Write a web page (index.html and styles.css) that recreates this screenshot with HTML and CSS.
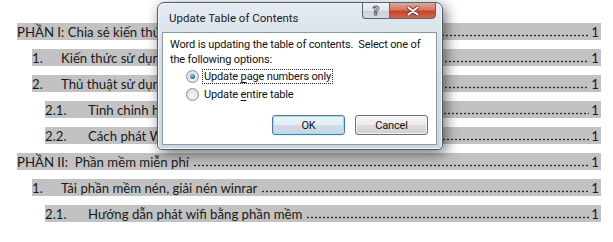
FILE: index.html
```html
<!DOCTYPE html>
<html>
<head>
<meta charset="utf-8">
<link rel="stylesheet" href="styles.css">
</head>
<body>
<div class="page">
  <div class="doc">
    <div class="row lv0"><span class="title">PHẦN I: Chia sẻ kiến thức máy tính</span><span class="leader"></span><span class="pg">1</span></div>
    <div class="row lv1"><span class="num">1.</span><span class="title">Kiến thức sử dụng máy tính</span><span class="leader"></span><span class="pg">1</span></div>
    <div class="row lv1"><span class="num">2.</span><span class="title">Thủ thuật sử dụng máy tính</span><span class="leader"></span><span class="pg">1</span></div>
    <div class="row lv2"><span class="num">2.1.</span><span class="title">Tinh chỉnh hệ thống</span><span class="leader"></span><span class="pg">1</span></div>
    <div class="row lv2"><span class="num">2.2.</span><span class="title">Cách phát Wifi</span><span class="leader"></span><span class="pg">1</span></div>
    <div class="row lv0"><span class="title">PHẦN II:&nbsp; Phần mềm miễn phí</span><span class="leader"></span><span class="pg">1</span></div>
    <div class="row lv1"><span class="num">1.</span><span class="title">Tải phần mềm nén, giải nén winrar</span><span class="leader"></span><span class="pg">1</span></div>
    <div class="row lv2"><span class="num">2.1.</span><span class="title">Hướng dẫn phát wifi bằng phần mềm</span><span class="leader"></span><span class="pg">1</span></div>
  </div>

  <div class="dialog">
    <div class="titlebar">
      <span class="dtitle">Update Table of Contents</span>
      <div class="caption-btns">
        <span class="help">?</span>
        <span class="close">
          <svg width="14" height="10" viewBox="0 0 14 10"><path d="M2.5 1.5 L11.5 8.5 M11.5 1.5 L2.5 8.5" stroke="#7a2a1a" stroke-width="3.6" stroke-linecap="round"/><path d="M2.5 1.5 L11.5 8.5 M11.5 1.5 L2.5 8.5" stroke="#fff" stroke-width="2.2" stroke-linecap="round"/></svg>
        </span>
      </div>
    </div>
    <div class="panel">
      <p class="msg">Word is updating the table of contents.&nbsp; Select one of<br>the following options:</p>
      <div class="options">
        <div class="opt"><span class="radio checked"></span><span class="lbl focus">Update <u>p</u>age numbers only</span></div>
        <div class="opt"><span class="radio"></span><span class="lbl">Update <u>e</u>ntire table</span></div>
      </div>
      <div class="buttons">
        <span class="btn default">OK</span>
        <span class="btn">Cancel</span>
      </div>
    </div>
  </div>
</div>
</body>
</html>
```

FILE: styles.css
```css
html, body {
  margin: 0;
  padding: 0;
  background: #fff;
}
.page {
  position: relative;
  width: 613px;
  height: 242px;
  overflow: hidden;
  background: #fff;
}
.doc {
  display: flex;
  flex-direction: column;
  gap: 9px;
  padding: 23px 12px 0 0;
  font-family: Lato, "Noto Sans", sans-serif;
  font-size: 13.2px;
  color: #1a1a1a;
}
.row {
  display: flex;
  align-items: center;
  height: 17px;
  background: #c2c2c2;
  white-space: nowrap;
  overflow: hidden;
}
.lv0 { margin-left: 17px; }
.lv1 { margin-left: 32px; }
.lv2 { margin-left: 45px; }
.lv1 .num { width: 29px; flex: none; }
.lv2 .num { width: 43px; flex: none; }
.title { flex: none; padding-right: 3px; }
.leader {
  flex: 1;
  align-self: stretch;
  background-image: radial-gradient(circle, #2a2a2a 0.75px, rgba(42,42,42,0) 1.2px);
  background-size: 4px 3px;
  background-repeat: repeat-x;
  background-position: 1px 11px;
}
.pg { flex: none; padding: 0 2px 0 2px; }

/* dialog */
.dialog {
  position: absolute;
  left: 157px;
  top: 2px;
  width: 286px;
  height: 148px;
  box-sizing: border-box;
  border: 1px solid #4e5a64;
  border-radius: 7px 7px 5px 5px;
  background: linear-gradient(180deg, #e4ebf1 0%, #d3dde6 40%, #cdd7e0 100%);
  box-shadow: 3px 4px 14px rgba(0,0,0,0.55), inset 0 0 0 1px rgba(255,255,255,0.75);
  display: flex;
  flex-direction: column;
  padding: 0 5px 4px 4px;
  font-family: Roboto, "Open Sans", sans-serif;
  font-size: 11px;
  letter-spacing: -0.15px;
  color: #111;
}
.titlebar {
  height: 29px;
  display: flex;
  align-items: flex-start;
  justify-content: space-between;
  flex: none;
}
.dtitle {
  margin: 8px 0 0 7px;
  font-size: 11.5px;
  letter-spacing: 0;
  color: #1b1b1b;
}
.caption-btns {
  display: flex;
  margin-right: 1px;
  margin-top: -1px;
}
.help, .close {
  height: 17px;
  box-sizing: border-box;
  border: 1px solid #5a6570;
  display: flex;
  align-items: center;
  justify-content: center;
}
.help {
  width: 27px;
  border-right: none;
  border-radius: 0 0 0 4px;
  background: linear-gradient(180deg, #eef2f5 0%, #dfe6ec 50%, #c8d2da 51%, #d6dee5 100%);
  font-family: "DejaVu Sans", sans-serif;
  font-weight: bold;
  font-size: 12px;
  color: #eef2f5;
  -webkit-text-stroke: 1px #59636c;
}
.close {
  width: 47px;
  border-radius: 0 0 4px 0;
  background: linear-gradient(180deg, #e9a48f 0%, #d9735a 48%, #c4442a 52%, #d5654a 100%);
}
.panel {
  flex: 1;
  background: #fff;
  border: 1px solid #8c99a4;
  display: flex;
  flex-direction: column;
  padding: 4px 8px 9px 7px;
}
.msg {
  margin: 0;
  line-height: 15px;
  white-space: nowrap;
}
.options {
  display: flex;
  flex-direction: column;
  gap: 3px;
  margin: 2px 0 0 16px;
}
.opt {
  display: flex;
  align-items: center;
  gap: 4px;
  height: 15px;
}
.radio {
  width: 13px;
  height: 13px;
  box-sizing: border-box;
  border-radius: 50%;
  border: 1px solid #8e8f8f;
  background: radial-gradient(circle at 50% 60%, #f7f7f7 0%, #e4e4e4 55%, #cfcfcf 100%);
  display: flex;
  align-items: center;
  justify-content: center;
  flex: none;
}
.radio.checked::after {
  content: "";
  width: 5px;
  height: 5px;
  border-radius: 50%;
  background: radial-gradient(circle at 40% 35%, #9fd3f5 0%, #2a6ea8 60%, #174a7a 100%);
}
.lbl {
  padding: 0 1px;
  line-height: 13px;
}
.lbl u { text-decoration-thickness: 1px; text-underline-offset: 2px; }
.lbl.focus { outline: 1px dotted #222; }
.buttons {
  margin-top: auto;
  display: flex;
  justify-content: flex-end;
  gap: 10px;
}
.btn {
  width: 73px;
  height: 20px;
  box-sizing: border-box;
  border: 1px solid #707070;
  border-radius: 3px;
  background: linear-gradient(180deg, #f4f4f4 0%, #ebebeb 50%, #dddddd 51%, #d0d0d0 100%);
  display: flex;
  align-items: center;
  justify-content: center;
  box-shadow: inset 0 0 0 1px rgba(255,255,255,0.7);
}
.btn.default {
  border-color: #3c7fb1;
  background: linear-gradient(180deg, #eef5fa 0%, #e3edf4 50%, #d2dde6 51%, #c6d5e0 100%);
  box-shadow: inset 0 0 0 1px #a9dbf6;
}
```
